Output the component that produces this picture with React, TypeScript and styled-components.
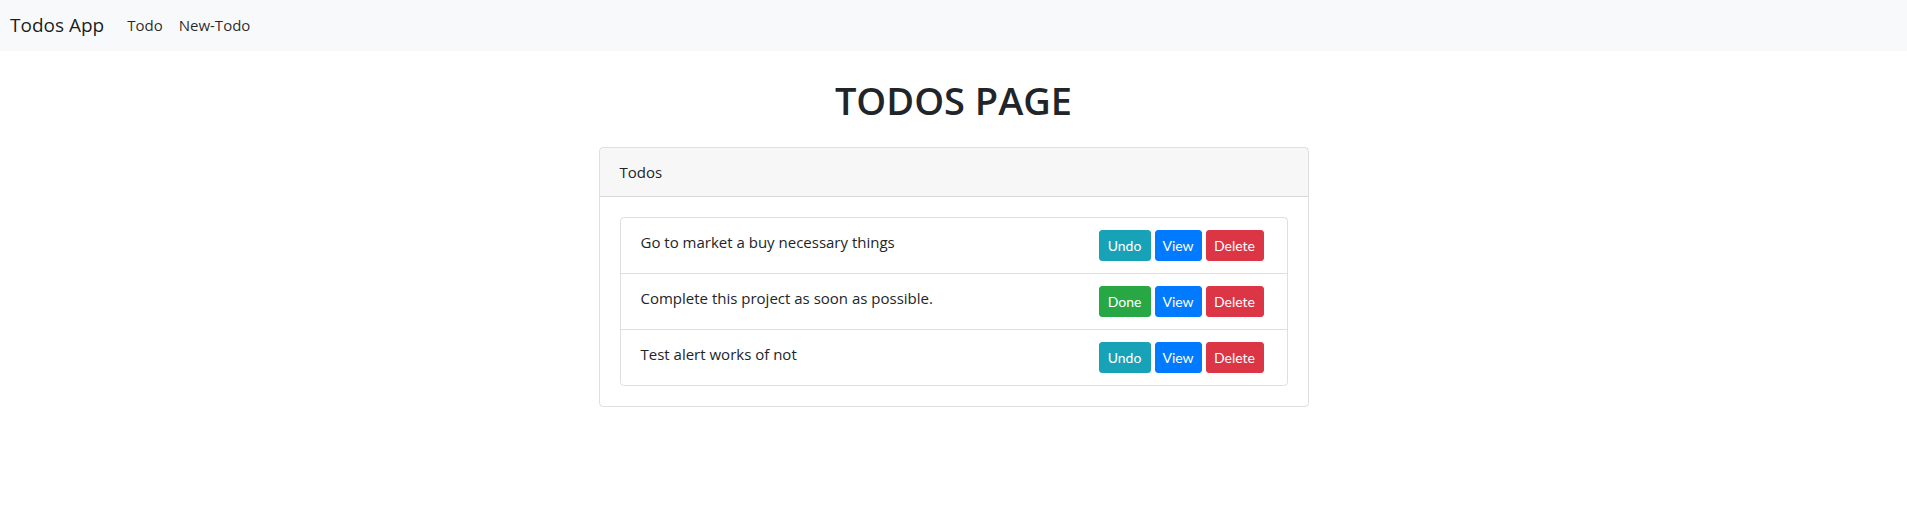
import React from "react";
import styled, { createGlobalStyle } from "styled-components";

const GlobalStyle = createGlobalStyle`
  * { box-sizing: border-box; }
  body {
    margin: 0;
    font-family: "Open Sans", "Noto Sans", Arial, sans-serif;
    font-size: 16px;
    line-height: 1.5;
    color: #212529;
    background: #fff;
  }
`;

const Navbar = styled.nav`
  display: flex;
  align-items: center;
  height: 51px;
  padding: 0 10px;
  background: #f8f9fa;
`;

const Brand = styled.a`
  font-size: 19px;
  color: rgba(0, 0, 0, 0.9);
  text-decoration: none;
  margin-right: 15px;
`;

const NavLink = styled.a`
  font-size: 15px;
  color: rgba(0, 0, 0, 0.85);
  text-decoration: none;
  padding: 0 8px;
`;

const Main = styled.main`
  display: flex;
  flex-direction: column;
  align-items: center;
`;

const Title = styled.h1`
  margin: 27px 0 23px;
  font-size: 38px;
  font-weight: 600;
  line-height: 1.2;
`;

const Card = styled.section`
  width: 710px;
  border: 1px solid rgba(0, 0, 0, 0.125);
  border-radius: 4px;
  overflow: hidden;
`;

const CardHeader = styled.header`
  padding: 12px 20px;
  background: rgba(0, 0, 0, 0.03);
  border-bottom: 1px solid rgba(0, 0, 0, 0.125);
  font-size: 15px;
  line-height: 24px;
`;

const CardBody = styled.div`
  padding: 20px;
`;

const List = styled.ul`
  list-style: none;
  margin: 0;
  padding: 0;
  border: 1px solid rgba(0, 0, 0, 0.125);
  border-radius: 4px;
`;

const Item = styled.li`
  display: flex;
  justify-content: space-between;
  align-items: flex-start;
  padding: 12px 23px 12px 20px;
  & + & {
    border-top: 1px solid rgba(0, 0, 0, 0.125);
  }
`;

const ItemText = styled.span`
  font-size: 15px;
  line-height: 24px;
`;

const Actions = styled.div`
  display: flex;
  gap: 4px;
`;

const variants: Record<string, string> = {
  info: "#17a2b8",
  success: "#28a745",
  primary: "#007bff",
  danger: "#dc3545",
};

const Button = styled.button<{ $variant: string; $w: number }>`
  width: ${(p) => p.$w}px;
  height: 31px;
  padding: 0;
  border: 1px solid ${(p) => variants[p.$variant]};
  border-radius: 3px;
  background: ${(p) => variants[p.$variant]};
  color: #fff;
  font-family: "Lato", "Open Sans", sans-serif;
  font-size: 14px;
  cursor: pointer;
`;

const todos = [
  { text: "Go to market a buy necessary things", done: true },
  { text: "Complete this project as soon as possible.", done: false },
  { text: "Test alert works of not", done: true },
];

export default function App() {
  return (
    <>
      <GlobalStyle />
      <Navbar>
        <Brand href="#">Todos App</Brand>
        <NavLink href="#">Todo</NavLink>
        <NavLink href="#">New-Todo</NavLink>
      </Navbar>
      <Main>
        <Title>TODOS PAGE</Title>
        <Card>
          <CardHeader>Todos</CardHeader>
          <CardBody>
            <List>
              {todos.map((t) => (
                <Item key={t.text}>
                  <ItemText>{t.text}</ItemText>
                  <Actions>
                    {t.done ? (
                      <Button $variant="info" $w={52}>Undo</Button>
                    ) : (
                      <Button $variant="success" $w={52}>Done</Button>
                    )}
                    <Button $variant="primary" $w={47}>View</Button>
                    <Button $variant="danger" $w={58}>Delete</Button>
                  </Actions>
                </Item>
              ))}
            </List>
          </CardBody>
        </Card>
      </Main>
    </>
  );
}
